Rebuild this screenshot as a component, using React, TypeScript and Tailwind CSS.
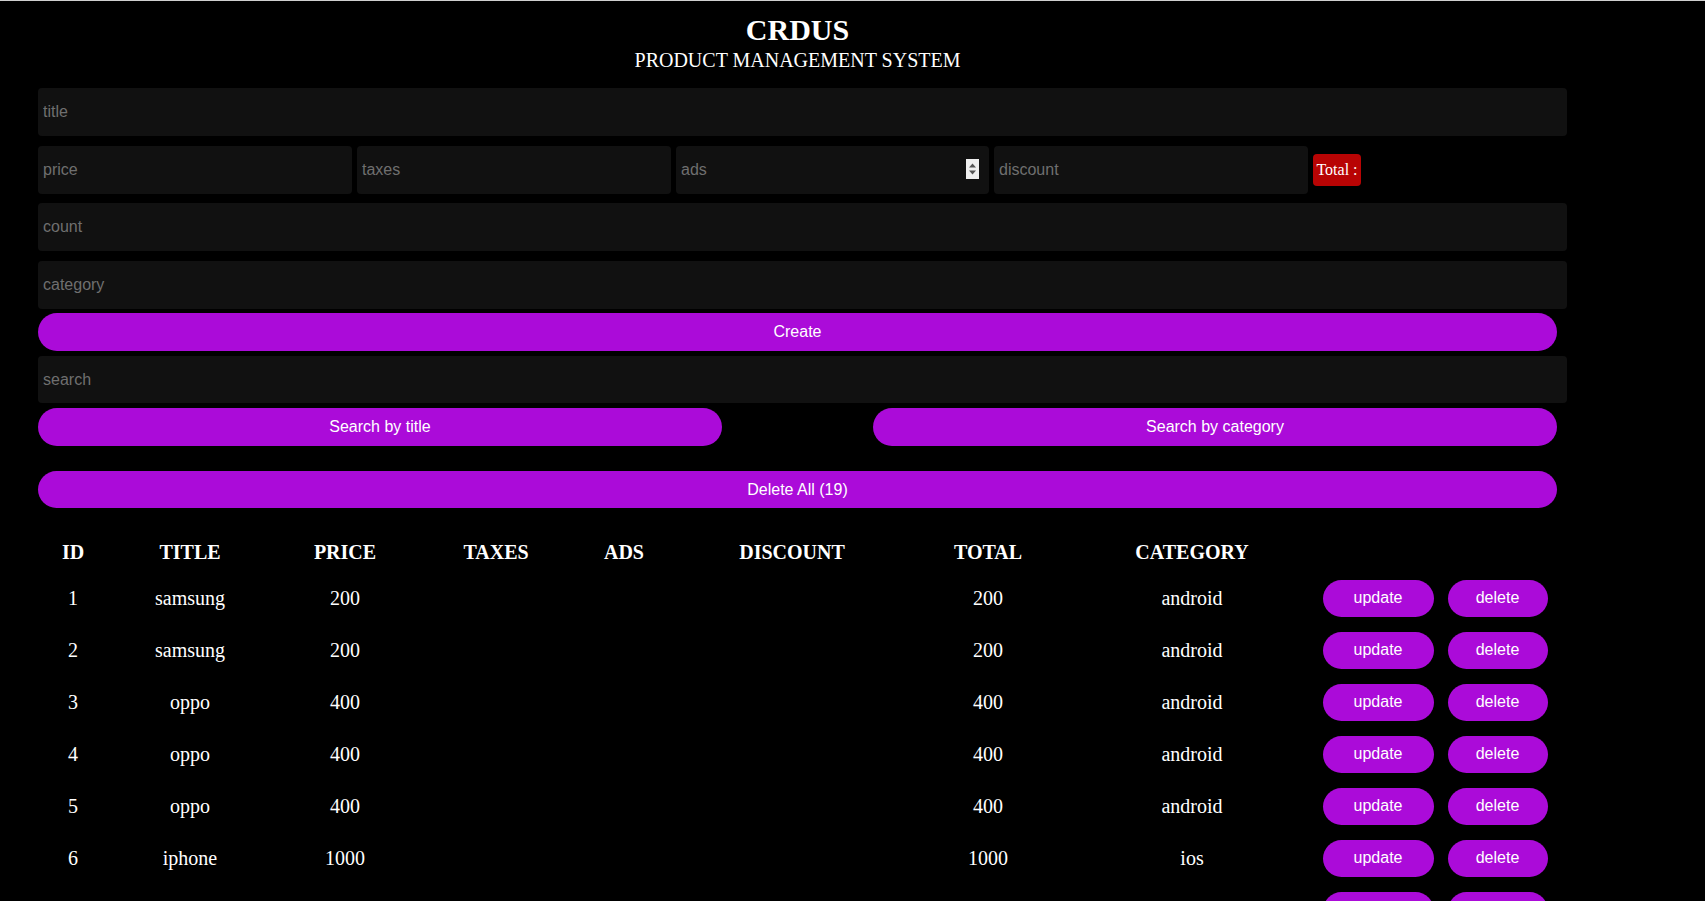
import React from "react"

const PRODUCTS = [
  { id: 1, title: "samsung", price: 200, total: 200, category: "android" },
  { id: 2, title: "samsung", price: 200, total: 200, category: "android" },
  { id: 3, title: "oppo", price: 400, total: 400, category: "android" },
  { id: 4, title: "oppo", price: 400, total: 400, category: "android" },
  { id: 5, title: "oppo", price: 400, total: 400, category: "android" },
  { id: 6, title: "iphone", price: 1000, total: 1000, category: "ios" },
  { id: 7, title: "iphone", price: 1000, total: 1000, category: "ios" },
  { id: 8, title: "iphone", price: 1000, total: 1000, category: "ios" },
  { id: 9, title: "iphone", price: 1000, total: 1000, category: "ios" },
]

const COLS = [70, 164, 146, 156, 100, 236, 156, 252, 120, 119]
const HEADERS = ["ID", "TITLE", "PRICE", "TAXES", "ADS", "DISCOUNT", "TOTAL", "CATEGORY", "", ""]

const inputBase =
  "rounded-[4px] bg-[#111111] px-[5px] text-[16px] text-white outline-none placeholder:text-[#6f6f6f]"

const pill = "rounded-full bg-[#ab0bd9] text-[16px] text-white"

const Spinner = () => (
  <div className="pointer-events-none absolute top-[13px] right-[10px] flex h-[20px] w-[13px] items-center justify-center bg-[#efefef]">
    <svg width="9" height="14" viewBox="0 0 9 14" aria-hidden="true">
      <path d="M4.5 1.5 L8 5.5 H1 Z" fill="#555" />
      <path d="M1 8.5 H8 L4.5 12.5 Z" fill="#555" />
    </svg>
  </div>
)

export default function App() {
  return (
    <div className="min-h-screen border-t border-[#cfcfcf] bg-black font-['Liberation_Sans',Arial,sans-serif] text-white">
      <div className="ml-[38px] w-[1519px]">
        <header className="pt-[12px] text-center font-['Liberation_Serif','Times_New_Roman',serif]">
          <h1 className="text-[30px] leading-[34px] font-bold">CRDUS</h1>
          <p className="text-[20px] leading-[26px]">PRODUCT MANAGEMENT SYSTEM</p>
        </header>

        <div className="mt-[15px] flex flex-col">
          <input placeholder="title" className={`${inputBase} mb-[10px] h-[48px] w-[1529px]`} />

          <div className="mb-[9px] flex items-center gap-[5px]">
            <input placeholder="price" className={`${inputBase} h-[48px] w-[314px]`} />
            <input placeholder="taxes" className={`${inputBase} h-[48px] w-[314px]`} />
            <div className="relative">
              <input placeholder="ads" className={`${inputBase} h-[48px] w-[313px]`} />
              <Spinner />
            </div>
            <input placeholder="discount" className={`${inputBase} h-[48px] w-[314px]`} />
            <small className="flex h-[32px] w-[48px] items-center justify-center rounded-[4px] bg-[#b80404] font-['Liberation_Serif','Times_New_Roman',serif] text-[16px] text-white">
              Total :
            </small>
          </div>

          <input placeholder="count" className={`${inputBase} mb-[10px] h-[48px] w-[1529px]`} />
          <input placeholder="category" className={`${inputBase} mb-[4px] h-[48px] w-[1529px]`} />

          <button className={`${pill} mb-[5px] h-[38px] w-full`}>Create</button>

          <input placeholder="search" className={`${inputBase} mb-[5px] h-[47px] w-[1529px]`} />

          <div className="mb-[25px] flex justify-between">
            <button className={`${pill} h-[38px] w-[684px]`}>Search by title</button>
            <button className={`${pill} h-[38px] w-[684px]`}>Search by category</button>
          </div>

          <button className={`${pill} h-[37px] w-full`}>Delete All (19)</button>
        </div>

        <table className="mt-[24px] w-full table-fixed border-collapse text-center font-['Liberation_Serif','Times_New_Roman',serif] text-[20px]">
          <colgroup>
            {COLS.map((w, i) => (
              <col key={i} style={{ width: w }} />
            ))}
          </colgroup>
          <thead>
            <tr className="h-[40px]">
              {HEADERS.map((h, i) => (
                <th key={i} className="p-0 font-bold">
                  {h}
                </th>
              ))}
            </tr>
          </thead>
          <tbody>
            {PRODUCTS.map((p) => (
              <tr key={p.id} className="h-[52px]">
                <td className="p-0">{p.id}</td>
                <td className="p-0">{p.title}</td>
                <td className="p-0">{p.price}</td>
                <td className="p-0"></td>
                <td className="p-0"></td>
                <td className="p-0"></td>
                <td className="p-0">{p.total}</td>
                <td className="p-0">{p.category}</td>
                <td className="p-0">
                  <button className={`${pill} h-[37px] w-[111px] font-['Liberation_Sans',Arial,sans-serif]`}>
                    update
                  </button>
                </td>
                <td className="p-0">
                  <button className={`${pill} h-[37px] w-[100px] font-['Liberation_Sans',Arial,sans-serif]`}>
                    delete
                  </button>
                </td>
              </tr>
            ))}
          </tbody>
        </table>
      </div>
    </div>
  )
}
